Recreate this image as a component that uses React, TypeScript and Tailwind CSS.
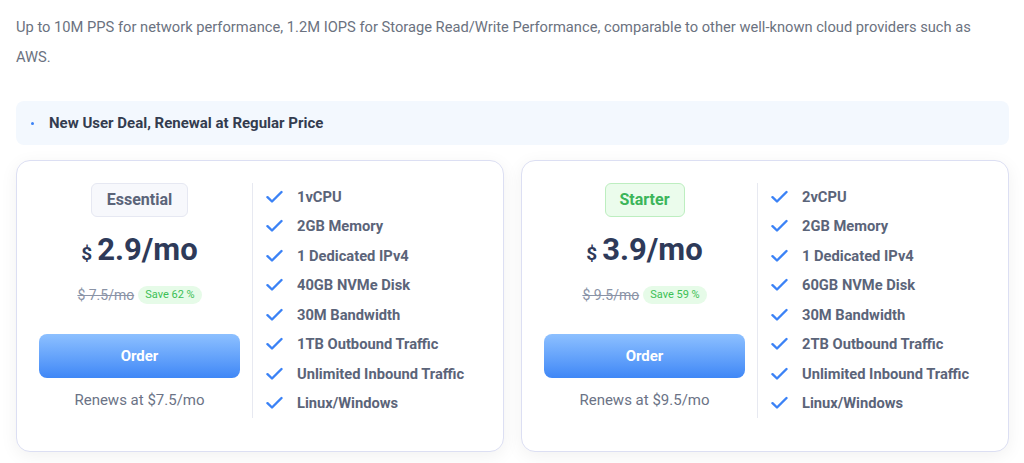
import React from "react";

const Check = () => (
  <svg width="17" height="14" viewBox="0 0 17 14" fill="none" className="shrink-0">
    <path d="M1.5 7.2 L6 11.5 L15.5 2" stroke="#3b82f6" strokeWidth="2.4" strokeLinecap="round" strokeLinejoin="round" />
  </svg>
);

type Plan = {
  name: string;
  green: boolean;
  price: string;
  old: string;
  save: string;
  renew: string;
  features: string[];
};

const plans: Plan[] = [
  {
    name: "Essential",
    green: false,
    price: "2.9/mo",
    old: "$ 7.5/mo",
    save: "Save 62 %",
    renew: "Renews at $7.5/mo",
    features: ["1vCPU", "2GB Memory", "1 Dedicated IPv4", "40GB NVMe Disk", "30M Bandwidth", "1TB Outbound Traffic", "Unlimited Inbound Traffic", "Linux/Windows"],
  },
  {
    name: "Starter",
    green: true,
    price: "3.9/mo",
    old: "$ 9.5/mo",
    save: "Save 59 %",
    renew: "Renews at $9.5/mo",
    features: ["2vCPU", "2GB Memory", "1 Dedicated IPv4", "60GB NVMe Disk", "30M Bandwidth", "2TB Outbound Traffic", "Unlimited Inbound Traffic", "Linux/Windows"],
  },
];

function Card({ p }: { p: Plan }) {
  return (
    <div className="flex-1 rounded-[14px] border border-[#dcdff3] bg-white pl-[22px] pt-[22px] pb-[33px] shadow-[0_4px_18px_rgba(0,0,0,0.06)] flex">
      <div className="w-[213px] pr-[12px] flex flex-col items-center">
        <div
          className={
            p.green
              ? "h-[34px] px-[14px] flex items-center rounded-[6px] border border-[#bdeec0] bg-[#ebfcec] text-[#3cb55a] text-[16px] font-bold"
              : "h-[34px] px-[15px] flex items-center rounded-[6px] border border-[#e6e8f2] bg-[#f7f8fc] text-[#5b6479] text-[16px] font-bold"
          }
        >
          {p.name}
        </div>
        <div className="mt-[13px] h-[40px] flex items-baseline text-[#2e3a59] font-bold">
          <span className="text-[19px] mr-[5px]">$</span>
          <span className="text-[31px] leading-[40px]">{p.price}</span>
        </div>
        <div className="mt-[15px] h-[20px] flex items-center gap-[4px]">
          <span className="text-[14px] text-[#8a93a6] line-through">{p.old}</span>
          <span className="h-[18px] px-[7px] rounded-full bg-[#e6fbe8] text-[#3cbf55] text-[11px] flex items-center">{p.save}</span>
        </div>
        <button className="mt-[29px] w-full h-[44px] rounded-[8px] bg-gradient-to-b from-[#8dc0ff] to-[#3f87f6] text-white text-[15px] font-bold">
          Order
        </button>
        <div className="mt-[11px] text-[15px] leading-[22px] text-[#6b7386]">{p.renew}</div>
      </div>
      <div className="flex-1 border-l border-[#e7e9f1] pl-[13px] pt-[0px]">
        <div className="-mt-[1px]">
          {p.features.map((f) => (
            <div key={f} className="h-[29.5px] flex items-center gap-[14px]">
              <Check />
              <span className="text-[14.7px] font-bold text-[#5b6479]">{f}</span>
            </div>
          ))}
        </div>
      </div>
    </div>
  );
}

export default function App() {
  return (
    <div className="w-[1024px] h-[463px] bg-white overflow-hidden px-[16px] pt-[12px] pr-[15px]" style={{ fontFamily: "Roboto, 'Liberation Sans', sans-serif" }}>
      <p className="text-[14.7px] leading-[30px] text-[#6b7280]">
        Up to 10M PPS for network performance, 1.2M IOPS for Storage Read/Write Performance, comparable to other well-known cloud providers such as AWS.
      </p>
      <div className="mt-[29px] h-[44px] rounded-[8px] bg-[#f3f8fe] flex items-center pl-[15px]">
        <span className="w-[3px] h-[3px] rounded-full bg-[#3b82f6]" />
        <span className="ml-[15px] text-[15px] font-bold text-[#333c4f]">New User Deal, Renewal at Regular Price</span>
      </div>
      <div className="mt-[15px] flex gap-[17px]">
        {plans.map((p) => (
          <Card key={p.name} p={p} />
        ))}
      </div>
    </div>
  );
}
